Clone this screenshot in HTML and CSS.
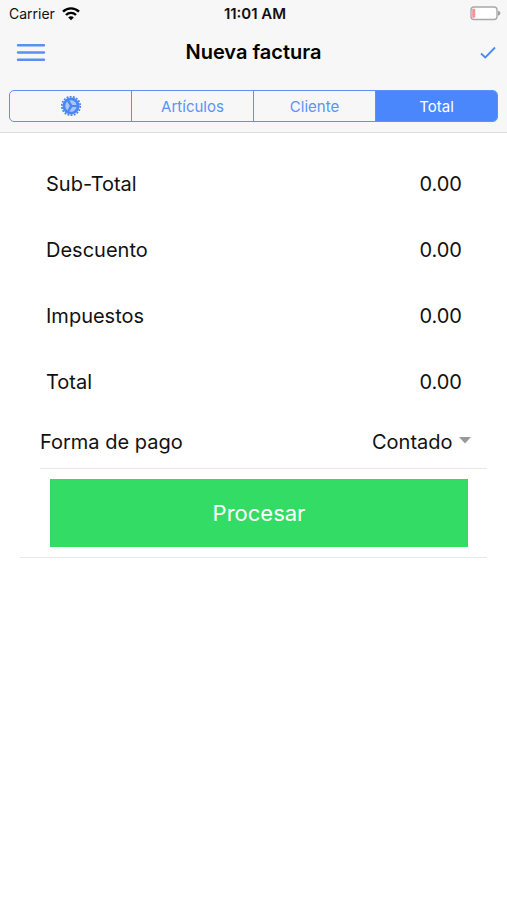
FILE: index.html
```html
<!DOCTYPE html>
<html lang="es">
<head>
  <meta charset="UTF-8">
  <meta name="viewport" content="width=device-width, initial-scale=1.0">
  <title>Nueva factura</title>
  <link rel="stylesheet" href="styles.css">
</head>
<body>

<header class="header">
  <div class="status-bar">
    <div class="carrier">
      <span>Carrier</span>
      <svg width="18" height="14" viewBox="0 0 18 14" fill="none" stroke="#000" stroke-width="2.4">
        <path d="M1 4.700C5.500 .2 12.500 .2 17 4.700"/>
        <path d="M4 8c2.800-2.800 7.200-2.800 10 0"/>
        <path d="M9 13.200L6.200 10.400c1.600-1.500 4-1.500 5.600 0z" fill="#000" stroke="none"/>
      </svg>
    </div>
    <span class="time">11:01 AM</span>
    <svg class="battery" width="31" height="15" viewBox="0 0 31 15">
      <rect x="1" y="1" width="26" height="12.500" rx="3" fill="#fff" stroke="#a9a9a9" stroke-width="1.400"/>
      <rect x="2.200" y="2.800" width="3" height="9" rx="1" fill="#f98f9a"/>
      <path d="M28 4.700c3.200.8 3.200 4.200 0 5z" fill="#a0a0a0"/>
    </svg>
  </div>

  <div class="nav-bar">
    <button type="button" class="icon-button menu-button" aria-label="Menú">
      <svg width="30" height="18" viewBox="0 0 30 18" stroke="#5b90ee" stroke-width="2.400" stroke-linecap="round">
        <path d="M2 2.300h26M2 9.500h26M2 16.700h26"/>
      </svg>
    </button>
    <h1 class="title">Nueva factura</h1>
    <button type="button" class="icon-button save-button" aria-label="Guardar">
      <svg width="16" height="14" viewBox="0 0 16 14" fill="none" stroke="#4a8af8" stroke-width="1.800">
        <path d="M1 8.500l4.300 4L15 2.500"/>
      </svg>
    </button>
  </div>

  <nav class="tabs">
    <button type="button" class="tab" aria-label="Ajustes">
      <svg width="22" height="22" viewBox="-11 -11 22 22" fill="none" stroke="#4a87f2">
        <circle r="9.200" stroke-width="1.800" stroke-dasharray="1.900 1.312"/>
        <circle r="8.500" fill="#4a87f2" stroke="none"/>
        <path d="M-1.700-5.500A5.700 5.700 0 0 1 5.600-1.100L1.300-1.100zM5.600 1.100A5.700 5.700 0 0 1-1.700 5.500L1.300 1.100zM-3.700 4.400A5.700 5.700 0 0 1-3.700-4.400L-1.200 0z" fill="#a9c6fa" stroke="none"/>
      </svg>
    </button>
    <button type="button" class="tab">Artículos</button>
    <button type="button" class="tab">Cliente</button>
    <button type="button" class="tab active">Total</button>
  </nav>
</header>

<main class="content">
  <dl class="totals">
    <div class="total-row">
      <dt>Sub-Total</dt>
      <dd>0.00</dd>
    </div>
    <div class="total-row">
      <dt>Descuento</dt>
      <dd>0.00</dd>
    </div>
    <div class="total-row">
      <dt>Impuestos</dt>
      <dd>0.00</dd>
    </div>
    <div class="total-row">
      <dt>Total</dt>
      <dd>0.00</dd>
    </div>
  </dl>

  <form class="payment-form">
    <div class="payment-row">
      <label for="formaPago">Forma de pago</label>
      <div class="select-wrap">
        <select id="formaPago">
          <option>Contado</option>
        </select>
        <svg width="12" height="10" viewBox="0 0 12 10"><path d="M0 0h12L6 6.500z" fill="#999"/></svg>
      </div>
    </div>
    <div class="submit-row">
      <button type="button" class="process-button">Procesar</button>
    </div>
  </form>
</main>

</body>
</html>
```
FILE: styles.css
```css
* {
  box-sizing: border-box;
}
body {
  margin: 0;
  background-color: #fff;
  color: #111;
  font-family: Inter, "Liberation Sans", sans-serif;
  font-size: 20px;
  line-height: 24px;
}
button, select {
  font-family: inherit;
  cursor: pointer;
}
svg {
  display: block;
}

/* Header */
.header {
  background-color: #f7f7f7;
  border-bottom: 1px solid #dcdcdc;
  padding-bottom: 10px;
}
.status-bar, .nav-bar {
  display: grid;
  grid-template-columns: 1fr auto 1fr;
  align-items: center;
}
.status-bar {
  height: 27px;
  padding: 0 6px 0 9px;
  font-size: 14px;
  line-height: 18px;
}
.carrier {
  display: flex;
  align-items: center;
  gap: 7px;
}
.time {
  font-size: 15px;
  font-weight: 600;
}
.battery {
  justify-self: end;
}
.nav-bar {
  height: 50px;
  padding: 0 11px;
}
.title {
  margin: 0;
  font-size: 20px;
  font-weight: 600;
  color: #000;
}
.icon-button {
  padding: 0;
  border: 0;
  background: none;
}
.menu-button {
  justify-self: start;
  padding-left: 5px;
}
.save-button {
  justify-self: end;
}
.tabs {
  display: flex;
  height: 32px;
  margin: 13px 9px 0;
  border: 1px solid #5b93f5;
  border-radius: 5px;
  overflow: hidden;
}
.tab {
  flex: 1;
  display: flex;
  align-items: center;
  justify-content: center;
  padding: 0;
  border: 0;
  border-left: 1px solid #5b93f5;
  background: none;
  color: #5b93f5;
  font-size: 15px;
}
.tab:first-child {
  border-left: 0;
}
.tab.active {
  background-color: #4a87fc;
  color: #fff;
}

/* Invoice totals */
.content {
  padding: 18px 20px;
}
.totals {
  margin: 0;
  padding: 0 25px 0 26px;
}
.total-row {
  display: flex;
  align-items: center;
  justify-content: space-between;
  height: 66px;
}
.total-row dd {
  margin: 0;
}

/* Payment */
.payment-form {
  border-bottom: 1px solid #e8e8e8;
}
.payment-row {
  display: flex;
  align-items: center;
  justify-content: space-between;
  height: 54px;
  margin-left: 20px;
  padding-right: 16px;
  border-bottom: 1px solid #e8e8e8;
}
.select-wrap {
  display: flex;
  align-items: center;
  gap: 6px;
}
.select-wrap select {
  appearance: none;
  padding: 0;
  border: 0;
  background: none;
  color: inherit;
  font-size: 20px;
}
.submit-row {
  padding: 10px 19px 10px 30px;
}
.process-button {
  display: block;
  width: 100%;
  height: 68px;
  border: 0;
  background-color: #33dc65;
  color: #fff;
  font-size: 22px;
}
```
